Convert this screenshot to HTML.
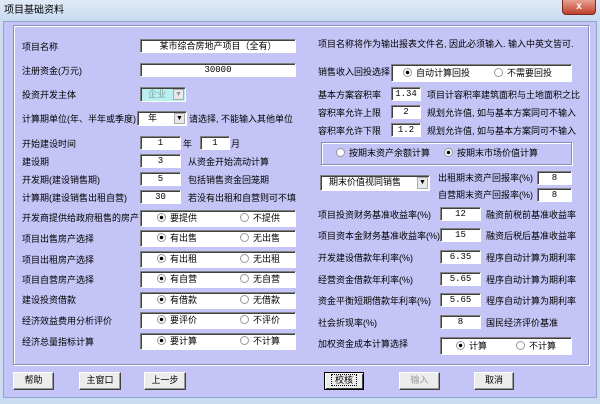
<!DOCTYPE html>
<html><head><meta charset="utf-8"><style>
*{margin:0;padding:0;box-sizing:border-box}
body{width:600px;height:404px;overflow:hidden;background:#c9dcf2;font-family:"Liberation Sans","Noto Sans CJK SC",sans-serif;font-size:9px;color:#000;position:relative}
.a{position:absolute;white-space:nowrap;line-height:13px}
.title{position:absolute;left:0;top:0;width:600px;height:21px;background:linear-gradient(#dfeaf7,#c9dbf1)}
.close{position:absolute;left:562px;top:0;width:34px;height:15px;background:linear-gradient(#e8a090,#c0402c);border:1px solid #7a2a20;border-top:none;border-radius:0 0 4px 4px;color:#fff;font-weight:bold;text-align:center;font-size:10px;line-height:13px}
.client{position:absolute;left:3px;top:21px;width:594px;height:377px;background:#c4c4f6;border:1px solid #8fa5c8}
.panel{position:absolute;left:13px;top:25px;width:576px;height:340px;border:1px solid #8c8cb8;box-shadow:inset 1px 1px 0 #fff,1px 1px 0 #fff}
.in{position:absolute;background:#fff;border:1px solid;border-color:#808080 #fff #fff #808080;box-shadow:inset 1px 1px 0 #404040;text-align:center;line-height:12px;font-family:"Liberation Mono","Noto Sans CJK SC",monospace;font-size:9px;overflow:hidden}
.box{position:absolute;background:#fff;border:1px solid;border-color:#808080 #fff #fff #808080;box-shadow:inset 1px 1px 0 #404040}
.r{position:absolute;white-space:nowrap;line-height:13px}
.r::before{content:"";display:inline-block;width:7px;height:7px;border:1px solid #999;border-radius:50%;margin-right:4px;vertical-align:-1px;background:#fff}
.r.on::before{background:radial-gradient(#000 1.5px,#fff 2px)}
.btn{position:absolute;height:18px;background:#ececec;border:1px solid;border-color:#fff #404040 #404040 #fff;box-shadow:inset -1px -1px 0 #999;text-align:center;line-height:15px}
.dd{position:absolute;right:1px;top:1px;width:11px;bottom:1px;background:#e8e8e8;border:1px solid #aaa;font-size:7px;text-align:center;line-height:10px}
.t{font-family:"Liberation Sans","Noto Sans CJK SC",sans-serif}
</style></head><body>
<div class="title"><span class="a" style="left:4px;top:4px;font-size:10px">项目基础资料</span><div class="close">x</div></div>
<div class="client"></div>
<div class="panel"></div>

<span class="a" style="left:22px;top:41px">项目名称</span>
<div class="in t" style="left:140px;top:39px;width:156px;height:14px">某市综合房地产项目（全有）</div>
<span class="a" style="left:22px;top:65px">注册资金(万元)</span>
<div class="in" style="left:140px;top:63px;width:156px;height:14px">30000</div>
<span class="a" style="left:22px;top:89px">投资开发主体</span>
<div class="in t" style="left:140px;top:87px;width:46px;height:15px;background:#b8f0f0;text-align:left;padding-left:7px;color:#7fa0a0">企业<div class="dd" style="color:#999">▼</div></div>
<span class="a" style="left:22px;top:113px">计算期单位(年、半年或季度)</span>
<div class="in t" style="left:137px;top:111px;width:50px;height:15px;text-align:left;padding-left:10px">年<div class="dd">▼</div></div>
<span class="a" style="left:189px;top:113px">请选择, 不能输入其他单位</span>

<span class="a" style="left:22px;top:138px">开始建设时间</span>
<div class="in" style="left:140px;top:136px;width:41px;height:14px">1</div><span class="a" style="left:183px;top:138px">年</span>
<div class="in" style="left:200px;top:136px;width:30px;height:14px">1</div><span class="a" style="left:231px;top:138px">月</span>
<span class="a" style="left:22px;top:156px">建设期</span>
<div class="in" style="left:140px;top:154px;width:41px;height:14px">3</div><span class="a" style="left:188px;top:156px">从资金开始流动计算</span>
<span class="a" style="left:22px;top:174px">开发期(建设销售期)</span>
<div class="in" style="left:140px;top:172px;width:41px;height:14px">5</div><span class="a" style="left:188px;top:174px">包括销售资金回笼期</span>
<span class="a" style="left:22px;top:192px">计算期(建设销售出租自营)</span>
<div class="in" style="left:140px;top:190px;width:41px;height:14px">30</div><span class="a" style="left:188px;top:192px">若没有出租和自营则可不填</span>

<span class="a" style="left:22px;top:212px">开发商提供给政府租售的房产</span>
<div class="box" style="left:140px;top:210px;width:156px;height:17px"></div><span class="r on" style="left:157px;top:212px">要提供</span><span class="r" style="left:240px;top:212px">不提供</span>
<span class="a" style="left:22px;top:233px">项目出售房产选择</span>
<div class="box" style="left:140px;top:230px;width:156px;height:17px"></div><span class="r on" style="left:157px;top:232px">有出售</span><span class="r" style="left:240px;top:232px">无出售</span>
<span class="a" style="left:22px;top:254px">项目出租房产选择</span>
<div class="box" style="left:140px;top:251px;width:156px;height:17px"></div><span class="r on" style="left:157px;top:253px">有出租</span><span class="r" style="left:240px;top:253px">无出租</span>
<span class="a" style="left:22px;top:274px">项目自营房产选择</span>
<div class="box" style="left:140px;top:271px;width:156px;height:17px"></div><span class="r on" style="left:157px;top:273px">有自营</span><span class="r" style="left:240px;top:273px">无自营</span>
<span class="a" style="left:22px;top:294px">建设投资借款</span>
<div class="box" style="left:140px;top:292px;width:156px;height:17px"></div><span class="r on" style="left:157px;top:294px">有借款</span><span class="r" style="left:240px;top:294px">无借款</span>
<span class="a" style="left:22px;top:315px">经济效益费用分析评价</span>
<div class="box" style="left:140px;top:312px;width:156px;height:17px"></div><span class="r on" style="left:157px;top:314px">要评价</span><span class="r" style="left:240px;top:314px">不评价</span>
<span class="a" style="left:22px;top:336px">经济总量指标计算</span>
<div class="box" style="left:140px;top:333px;width:156px;height:17px"></div><span class="r on" style="left:157px;top:335px">要计算</span><span class="r" style="left:240px;top:335px">不计算</span>

<span class="a" style="left:318px;top:38px">项目名称将作为输出报表文件名, 因此必须输入. 输入中英文皆可.</span>
<span class="a" style="left:318px;top:66px">销售收入回投选择</span>
<div class="box" style="left:391px;top:64px;width:181px;height:18px"></div><span class="r on" style="left:403px;top:67px">自动计算回投</span><span class="r" style="left:494px;top:67px">不需要回投</span>
<span class="a" style="left:318px;top:89px">基本方案容积率</span>
<div class="in" style="left:391px;top:87px;width:30px;height:14px">1.34</div><span class="a" style="left:427px;top:89px">项目计容积率建筑面积与土地面积之比</span>
<span class="a" style="left:318px;top:107px">容积率允许上限</span>
<div class="in" style="left:391px;top:105px;width:30px;height:14px">2</div><span class="a" style="left:427px;top:107px">规划允许值, 如与基本方案同可不输入</span>
<span class="a" style="left:318px;top:125px">容积率允许下限</span>
<div class="in" style="left:391px;top:123px;width:30px;height:14px">1.2</div><span class="a" style="left:427px;top:125px">规划允许值, 如与基本方案同可不输入</span>
<div style="position:absolute;left:321px;top:142px;width:251px;height:23px;border:1px solid #8c8cb8;box-shadow:inset 1px 1px 0 #fff,1px 1px 0 #fff"></div>
<span class="r" style="left:336px;top:147px">按期末资产余额计算</span><span class="r on" style="left:444px;top:147px">按期末市场价值计算</span>
<div class="in t" style="left:320px;top:175px;width:110px;height:16px;text-align:left;padding-left:8px;line-height:13px">期末价值视同销售<div class="dd">▼</div></div>
<span class="a" style="left:438px;top:172px">出租期末资产回报率(%)</span>
<div class="in" style="left:537px;top:171px;width:35px;height:14px">8</div>
<span class="a" style="left:438px;top:189px">自营期末资产回报率(%)</span>
<div class="in" style="left:537px;top:188px;width:35px;height:14px">8</div>

<span class="a" style="left:318px;top:209px">项目投资财务基准收益率(%)</span>
<div class="in" style="left:440px;top:207px;width:41px;height:14px">12</div><span class="a" style="left:486px;top:209px">融资前税前基准收益率</span>
<span class="a" style="left:318px;top:230px">项目资本金财务基准收益率(%)</span>
<div class="in" style="left:440px;top:228px;width:41px;height:14px">15</div><span class="a" style="left:486px;top:230px">融资后税后基准收益率</span>
<span class="a" style="left:318px;top:252px">开发建设借款年利率(%)</span>
<div class="in" style="left:440px;top:250px;width:41px;height:14px">6.35</div><span class="a" style="left:486px;top:252px">程序自动计算为期利率</span>
<span class="a" style="left:318px;top:274px">经营资金借款年利率(%)</span>
<div class="in" style="left:440px;top:272px;width:41px;height:14px">5.65</div><span class="a" style="left:486px;top:274px">程序自动计算为期利率</span>
<span class="a" style="left:318px;top:295px">资金平衡短期借款年利率(%)</span>
<div class="in" style="left:440px;top:293px;width:41px;height:14px">5.65</div><span class="a" style="left:486px;top:295px">程序自动计算为期利率</span>
<span class="a" style="left:318px;top:317px">社会折现率(%)</span>
<div class="in" style="left:440px;top:315px;width:41px;height:14px">8</div><span class="a" style="left:486px;top:317px">国民经济评价基准</span>
<span class="a" style="left:318px;top:338px">加权资金成本计算选择</span>
<div class="box" style="left:440px;top:337px;width:132px;height:18px"></div><span class="r on" style="left:456px;top:340px">计算</span><span class="r" style="left:516px;top:340px">不计算</span>

<div class="btn" style="left:13px;top:372px;width:41px">帮助</div>
<div class="btn" style="left:79px;top:372px;width:42px">主窗口</div>
<div class="btn" style="left:144px;top:372px;width:42px">上一步</div>
<div class="btn" style="left:324px;top:372px;width:40px;border:1px solid #000;box-shadow:inset 1px 1px 0 #fff,inset -1px -1px 0 #404040"><span style="border:1px dotted #000;padding:0 3px">校核</span></div>
<div class="btn" style="left:399px;top:372px;width:41px;color:#9a9a9a">输入</div>
<div class="btn" style="left:474px;top:372px;width:40px">取消</div>
</body></html>
